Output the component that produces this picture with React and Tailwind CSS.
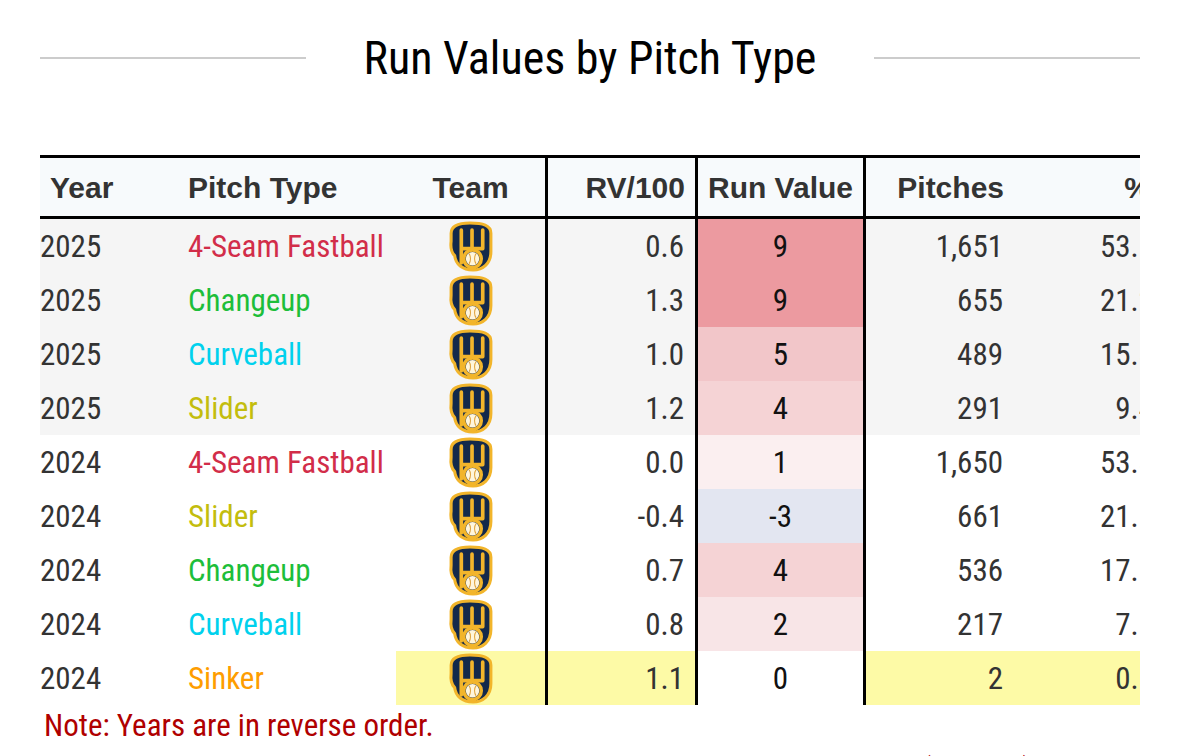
import React from 'react';

const rows = [
  { year: 2025, pitch: '4-Seam Fastball', color: 'text-[#d22d49]', rv100: '0.6', rv: '9', rvBg: 'bg-[#ec9aa0]', pitches: '1,651', pct: '53.5', shade: true },
  { year: 2025, pitch: 'Changeup', color: 'text-[#1dbe3a]', rv100: '1.3', rv: '9', rvBg: 'bg-[#ec9aa0]', pitches: '655', pct: '21.2', shade: true },
  { year: 2025, pitch: 'Curveball', color: 'text-[#00d1ed]', rv100: '1.0', rv: '5', rvBg: 'bg-[#f2c6c9]', pitches: '489', pct: '15.8', shade: true },
  { year: 2025, pitch: 'Slider', color: 'text-[#c3bd0e]', rv100: '1.2', rv: '4', rvBg: 'bg-[#f5d3d5]', pitches: '291', pct: '9.4', shade: true },
  { year: 2024, pitch: '4-Seam Fastball', color: 'text-[#d22d49]', rv100: '0.0', rv: '1', rvBg: 'bg-[#fbeff0]', pitches: '1,650', pct: '53.8' },
  { year: 2024, pitch: 'Slider', color: 'text-[#c3bd0e]', rv100: '-0.4', rv: '-3', rvBg: 'bg-[#e3e6f1]', pitches: '661', pct: '21.6' },
  { year: 2024, pitch: 'Changeup', color: 'text-[#1dbe3a]', rv100: '0.7', rv: '4', rvBg: 'bg-[#f5d3d5]', pitches: '536', pct: '17.5' },
  { year: 2024, pitch: 'Curveball', color: 'text-[#00d1ed]', rv100: '0.8', rv: '2', rvBg: 'bg-[#f8e5e7]', pitches: '217', pct: '7.1' },
  { year: 2024, pitch: 'Sinker', color: 'text-[#fe9d00]', rv100: '1.1', rv: '0', rvBg: 'bg-white', pitches: '2', pct: '0.1', small: true },
];

// ball-in-glove mark
const GloveLogo = () => (
  <svg width="46" height="51" viewBox="0 0 45 50">
    <path
      d="M3 12 C3 4.5 10 2 21.5 2 C34 2 42 4 42 12 L42 30 C42 42 34 48 24.5 48 C14 48 7.5 42.5 6.5 34 C2.5 30 2.5 24 3 20 Z"
      fill="#13294b"
      stroke="#f2b52b"
      strokeWidth="3"
    />
    <path d="M13 9 V27 H34 V9 M23.5 9 V27 M13 27 V41" fill="none" stroke="#f2b52b" strokeWidth="3.6" strokeLinejoin="round" strokeLinecap="round" />
    <circle cx="24" cy="37" r="8.6" fill="none" stroke="#f2b52b" strokeWidth="3.4" />
    <circle cx="24" cy="37" r="6.6" fill="#fff6dc" />
    <path d="M20.5 32 C22.5 34.5 22.5 39.5 20.5 42 M27.5 32 C25.5 34.5 25.5 39.5 27.5 42" fill="none" stroke="#e0a23a" strokeWidth="1" />
  </svg>
);

const App = () => {
  return (
    <div className="min-h-screen w-full bg-white px-[40px] pt-[28px]">
      {/* Title */}
      <div className="flex items-center h-[60px] w-[1100px]">
        <div className="flex-1 h-[2px] bg-[#cccccc]"></div>
        <h2 className="px-[58px] text-[46px] leading-none text-black font-['Roboto_Condensed','Roboto',sans-serif] font-stretch-condensed">
          Run Values by Pitch Type
        </h2>
        <div className="flex-1 h-[2px] bg-[#cccccc]"></div>
      </div>

      {/* Table */}
      <div className="mt-[67px] w-[1100px] overflow-hidden">
        <div className="w-[1123px]">
          <div className="flex h-[64px] bg-[#f7fafc] border-y-[3px] border-black text-[30px] font-bold text-[#333333] font-['Liberation_Sans',Arial,sans-serif]">
            <div className="w-[138px] pl-[10px] flex items-center">Year</div>
            <div className="w-[218px] pl-[10px] flex items-center">Pitch Type</div>
            <div className="w-[149px] flex items-center justify-center">Team</div>
            <div className="w-[150px] border-l-[3px] border-black pr-[10px] flex items-center justify-end">RV/100</div>
            <div className="w-[168px] border-l-[3px] border-black flex items-center justify-center">Run Value</div>
            <div className="w-[150px] border-l-[3px] border-black pr-[9px] flex items-center justify-end">Pitches</div>
            <div className="w-[150px] pr-[12px] flex items-center justify-end">%</div>
          </div>

          <div className="text-[31px] text-[#333333] font-['Roboto_Condensed','Roboto',sans-serif] font-stretch-condensed">
            {rows.map((r, i) => (
              <div key={i} className={`flex h-[54px] pt-[2px] ${r.shade ? 'bg-[#f5f5f5]' : 'bg-white'}`}>
                <div className="w-[138px] flex items-center">{r.year}</div>
                <div className={`w-[218px] pl-[10px] flex items-center ${r.color}`}>{r.pitch}</div>
                <div className={`w-[149px] -mt-[2px] flex items-center justify-center ${r.small ? 'bg-[#fdfaa6]' : ''}`}>
                  <GloveLogo />
                </div>
                <div className={`w-[150px] -mt-[2px] pt-[2px] border-l-[3px] border-black pr-[11px] flex items-center justify-end ${r.small ? 'bg-[#fdfaa6]' : ''}`}>
                  {r.rv100}
                </div>
                <div className={`w-[168px] -mt-[2px] pt-[2px] border-l-[3px] border-black flex items-center justify-center text-[#111111] ${r.rvBg}`}>
                  {r.rv}
                </div>
                <div className={`w-[150px] -mt-[2px] pt-[2px] border-l-[3px] border-black pr-[10px] flex items-center justify-end ${r.small ? 'bg-[#fdfaa6]' : ''}`}>
                  {r.pitches}
                </div>
                <div className={`w-[150px] -mt-[2px] pt-[2px] pr-[9px] flex items-center justify-end ${r.small ? 'bg-[#fdfaa6]' : ''}`}>
                  {r.pct}
                </div>
              </div>
            ))}
          </div>
        </div>
      </div>

      {/* Notes */}
      <div className="pl-[4px] pt-[2px] text-[31px] leading-[38px] text-[#b00000] font-['Roboto_Condensed','Roboto',sans-serif] font-stretch-condensed">
        <p>Note: Years are in reverse order.</p>
        <p className="mt-[6px]">Highlighted rows are a small sample, with fewer than 10 pitches thrown (RV/100) in a season of that type.</p>
      </div>
    </div>
  );
};

export default App;
